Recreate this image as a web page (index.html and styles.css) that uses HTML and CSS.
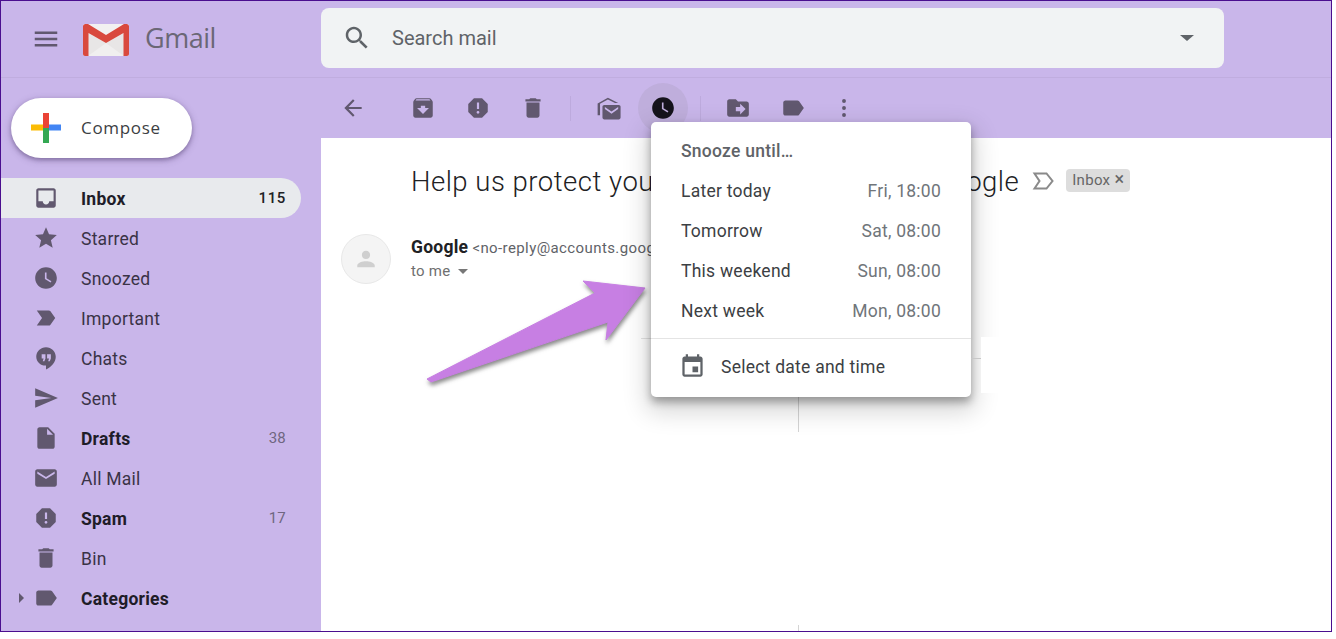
FILE: index.html
```html
<!DOCTYPE html>
<html lang="en">
<head>
    <meta charset="UTF-8">
    <title>Gmail</title>
    <link rel="stylesheet" href="styles.css">
</head>
<body>

    <svg class="sprite" xmlns="http://www.w3.org/2000/svg">
        <symbol id="i-menu" viewBox="0 0 24 24"><path d="M3 18h18v-2H3v2zm0-5h18v-2H3v2zm0-7v2h18V6H3z"/></symbol>
        <symbol id="i-search" viewBox="0 0 24 24"><path d="M15.5 14h-.79l-.28-.27C15.41 12.59 16 11.11 16 9.5 16 5.91 13.09 3 9.5 3S3 5.91 3 9.5 5.91 16 9.5 16c1.61 0 3.09-.59 4.23-1.57l.27.28v.79l5 4.99L20.49 19l-4.99-5zm-6 0C7.01 14 5 11.99 5 9.5S7.01 5 9.5 5 14 7.01 14 9.5 11.99 14 9.5 14z"/></symbol>
        <symbol id="i-inbox" viewBox="0 0 24 24"><path d="M19 3H5c-1.1 0-2 .9-2 2v14c0 1.1.9 2 2 2h14c1.1 0 2-.9 2-2V5c0-1.1-.9-2-2-2zm0 12h-4c0 1.66-1.34 3-3 3s-3-1.34-3-3H5V5h14v10z"/></symbol>
        <symbol id="i-star" viewBox="0 0 24 24"><path d="M12 17.27L18.18 21l-1.64-7.03L22 9.24l-7.19-.61L12 2 9.19 8.63 2 9.24l5.46 4.73L5.82 21z"/></symbol>
        <symbol id="i-clock" viewBox="0 0 24 24"><path d="M11.99 2C6.47 2 2 6.48 2 12s4.47 10 9.99 10C17.52 22 22 17.52 22 12S17.52 2 11.99 2zM16.2 16.2L11 13V7h1.5v5.2l4.5 2.7-.8 1.3z"/></symbol>
        <symbol id="i-important" viewBox="0 0 24 24"><path d="M3.5 18.99l11 .01c.67 0 1.27-.33 1.63-.84L20.5 12l-4.37-6.16c-.36-.51-.96-.84-1.63-.84l-11 .01L8.34 12 3.5 18.99z"/></symbol>
        <symbol id="i-chat" viewBox="0 0 24 24"><path d="M12 2C7 2 3 6 3 10.8 3 15.500 7 19 11.500 19H12v3.500c4.900-2.300 9-6.700 9-11.700C21 6 17 2 12 2zm-.5 10.500l-1 2.500H9l.8-2.500H8V8.500h3.500v4zm5 0l-1 2.500H14l.8-2.500H13V8.500h3.500v4z"/></symbol>
        <symbol id="i-send" viewBox="0 0 24 24"><path d="M2.010 21L23 12 2.010 3 2 10l15 2-15 2z"/></symbol>
        <symbol id="i-draft" viewBox="0 0 24 24"><path d="M6 2c-1.100 0-1.990.9-1.990 2L4 20c0 1.100.89 2 1.990 2H18c1.100 0 2-.9 2-2V8l-6-6H6zm7 7V3.500L18.500 9H13z"/></symbol>
        <symbol id="i-mail" viewBox="0 0 24 24"><path d="M20 4H4c-1.100 0-1.990.9-1.990 2L2 18c0 1.100.9 2 2 2h16c1.100 0 2-.9 2-2V6c0-1.100-.9-2-2-2zm0 4l-8 5-8-5V6l8 5 8-5v2z"/></symbol>
        <symbol id="i-report" viewBox="0 0 24 24"><path d="M15.730 3H8.270L3 8.270v7.460L8.270 21h7.460L21 15.730V8.270L15.730 3zM12 17.300c-.72 0-1.300-.58-1.300-1.300 0-.72.58-1.300 1.300-1.300.72 0 1.300.58 1.300 1.300 0 .72-.58 1.300-1.300 1.300zm1-4.300h-2V7h2v6z"/></symbol>
        <symbol id="i-bin" viewBox="0 0 24 24"><path d="M6 19c0 1.100.9 2 2 2h8c1.100 0 2-.9 2-2V7H6v12zM19 4h-3.500l-1-1h-5l-1 1H5v2h14V4z"/></symbol>
        <symbol id="i-label" viewBox="0 0 24 24"><path d="M17.630 5.840C17.270 5.330 16.670 5 16 5L5 5.010C3.900 5.010 3 5.900 3 7v10c0 1.100.9 1.990 2 1.990L16 19c.67 0 1.270-.33 1.630-.84L22 12l-4.370-6.160z"/></symbol>
        <symbol id="i-archive" viewBox="0 0 24 24"><path d="M20.540 5.230l-1.390-1.680C18.880 3.210 18.470 3 18 3H6c-.47 0-.88.21-1.160.55L3.460 5.230C3.170 5.570 3 6.020 3 6.500V19c0 1.100.9 2 2 2h14c1.100 0 2-.9 2-2V6.500c0-.48-.17-.93-.46-1.270zM12 17.500L6.500 12H10v-2h4v2h3.500L12 17.500zM5.120 5l.81-1h12l.94 1H5.120z"/></symbol>
        <symbol id="i-back" viewBox="0 0 24 24"><path d="M20 11H7.830l5.590-5.590L12 4l-8 8 8 8 1.410-1.410L7.830 13H20v-2z"/></symbol>
        <symbol id="i-unread" viewBox="0 0 24 24"><path d="M3 17.500V7.800L11.500 3 20 7.500h-2.600l-5.900-2.900L5 8v9.500H3zM8.500 9h12c.8 0 1.500.7 1.500 1.500v9c0 .8-.7 1.500-1.500 1.500h-12c-.8 0-1.500-.7-1.500-1.500v-9C7 9.700 7.700 9 8.500 9zm6 7.300l5.500-3.800v-1.700l-5.500 3.700L9 10.800v1.700l5.500 3.800z"/></symbol>
        <symbol id="i-move" viewBox="0 0 24 24"><path d="M20 6h-8l-2-2H4c-1.100 0-2 .9-2 2v12c0 1.100.9 2 2 2h16c1.100 0 2-.9 2-2V8c0-1.100-.9-2-2-2zm-6 12v-3h-4v-4h4V8l5 5-5 5z"/></symbol>
        <symbol id="i-more" viewBox="0 0 24 24"><circle cx="12" cy="5.500" r="1.800"/><circle cx="12" cy="12" r="1.800"/><circle cx="12" cy="18.500" r="1.800"/></symbol>
        <symbol id="i-event" viewBox="0 0 24 24"><path d="M17 12h-5v5h5v-5zM16 1v2H8V1H6v2H5c-1.110 0-1.990.9-1.990 2L3 19c0 1.100.89 2 2 2h14c1.100 0 2-.9 2-2V5c0-1.100-.9-2-2-2h-1V1h-2zm3 18H5V8h14v11z"/></symbol>
    </svg>

    <div class="frame">
        <header class="topbar">
            <div class="brand">
                <svg class="icon menu-icon"><use href="#i-menu"/></svg>
                <svg class="logo" viewBox="0 0 46 32">
                    <rect x="0" y="0" width="46" height="32" rx="2" fill="#f2f1f1"/>
                    <path d="M5 32V9l18 10L41 9v23z" fill="#e8e6e6"/>
                    <path d="M5 32l18-13 18 13z" fill="#f0efef"/>
                    <path d="M0 2.500C0 1 1 0 2.500 0H5l18 11L41 0h2.500C45 0 46 1 46 2.500V30c0 1.100-.9 2-2 2h-3.500V9L23 19 5.500 9v23H2c-1.100 0-2-.9-2-2z" fill="#d9493e"/>
                </svg>
                <span class="logo-text">Gmail</span>
            </div>
            <div class="search">
                <svg class="icon search-icon"><use href="#i-search"/></svg>
                <span class="search-text">Search mail</span>
                <span class="search-caret"></span>
            </div>
        </header>

        <div class="layout">
            <aside class="sidebar">
                <div class="compose">
                    <svg class="compose-plus" viewBox="0 0 30 30">
                        <rect x="0" y="11.500" width="15" height="6" fill="#fbbc05"/>
                        <rect x="15" y="11.500" width="15" height="6" fill="#4285f4"/>
                        <rect x="12" y="0" width="6" height="15" fill="#ea4335"/>
                        <rect x="12" y="15" width="6" height="15" fill="#34a853"/>
                    </svg>
                    <span>Compose</span>
                </div>
                <nav class="nav">
                    <div class="nav-row active bold"><svg class="icon"><use href="#i-inbox"/></svg><span class="nav-name">Inbox</span><span class="count">115</span></div>
                    <div class="nav-row"><svg class="icon"><use href="#i-star"/></svg><span class="nav-name">Starred</span></div>
                    <div class="nav-row"><svg class="icon"><use href="#i-clock"/></svg><span class="nav-name">Snoozed</span></div>
                    <div class="nav-row"><svg class="icon"><use href="#i-important"/></svg><span class="nav-name">Important</span></div>
                    <div class="nav-row"><svg class="icon"><use href="#i-chat"/></svg><span class="nav-name">Chats</span></div>
                    <div class="nav-row"><svg class="icon"><use href="#i-send"/></svg><span class="nav-name">Sent</span></div>
                    <div class="nav-row bold"><svg class="icon"><use href="#i-draft"/></svg><span class="nav-name">Drafts</span><span class="count">38</span></div>
                    <div class="nav-row"><svg class="icon"><use href="#i-mail"/></svg><span class="nav-name">All Mail</span></div>
                    <div class="nav-row bold"><svg class="icon"><use href="#i-report"/></svg><span class="nav-name">Spam</span><span class="count">17</span></div>
                    <div class="nav-row"><svg class="icon"><use href="#i-bin"/></svg><span class="nav-name">Bin</span></div>
                    <div class="nav-row bold"><span class="expand"></span><svg class="icon"><use href="#i-label"/></svg><span class="nav-name">Categories</span></div>
                    <div class="nav-row nav-last bold"><svg class="icon"></svg><span class="nav-name">Imports</span></div>
                </nav>
            </aside>

            <main class="content">
                <div class="toolbar">
                    <button class="tool back-tool"><svg class="icon"><use href="#i-back"/></svg></button>
                    <button class="tool"><svg class="icon"><use href="#i-archive"/></svg></button>
                    <button class="tool"><svg class="icon"><use href="#i-report"/></svg></button>
                    <button class="tool"><svg class="icon"><use href="#i-bin"/></svg></button>
                    <span class="tool-sep"></span>
                    <button class="tool"><svg class="icon unread-icon"><use href="#i-unread"/></svg></button>
                    <button class="tool tool-on"><svg class="icon"><use href="#i-clock"/></svg></button>
                    <span class="tool-sep"></span>
                    <button class="tool"><svg class="icon"><use href="#i-move"/></svg></button>
                    <button class="tool"><svg class="icon"><use href="#i-label"/></svg></button>
                    <button class="tool more-tool"><svg class="icon"><use href="#i-more"/></svg></button>
                </div>

                <section class="mail">
                    <div class="subject-row">
                        <h1 class="subject">Help us protect you: Security advice from Google</h1>
                        <svg class="flag" viewBox="0 0 24 24"><path d="M2.500 19.500l5-7.500-5-7.500h12l6 7.500-6 7.500z" fill="none" stroke="#8a8a8a" stroke-width="2"/></svg>
                        <span class="chip">Inbox <b>×</b></span>
                    </div>
                    <div class="sender">
                        <div class="avatar">
                            <svg viewBox="0 0 24 24"><path d="M12 12c2 0 3.300-1.500 3.300-3.300S14 5.400 12 5.400 8.700 6.900 8.700 8.700 10 12 12 12zm0 1.800c-2.700 0-7 1.200-7 3.400v1.400h14v-1.400c0-2.200-4.300-3.400-7-3.400z"/></svg>
                        </div>
                        <div class="sender-text">
                            <div class="sender-line"><strong>Google</strong> <span>&lt;no-reply@accounts.google.com&gt;</span></div>
                            <div class="to-line">to me <span class="to-caret"></span></div>
                        </div>
                    </div>
                </section>
            </main>
        </div>

        <span class="stray stray-v1"></span>
        <span class="stray stray-v2"></span>
        <span class="stray stray-h1"></span>

        <svg class="arrow" viewBox="420 275 235 115">
            <path d="M583 281L645 288 606 340 608 322 431 382 427 379 595 293z" fill="#c77fe3" stroke="#c77fe3" stroke-linejoin="round"/>
        </svg>

        <div class="snooze">
            <div class="snooze-title">Snooze until…</div>
            <div class="snooze-row"><span>Later today</span><span class="when">Fri, 18:00</span></div>
            <div class="snooze-row"><span>Tomorrow</span><span class="when">Sat, 08:00</span></div>
            <div class="snooze-row"><span>This weekend</span><span class="when">Sun, 08:00</span></div>
            <div class="snooze-row"><span>Next week</span><span class="when">Mon, 08:00</span></div>
            <div class="snooze-pick"><svg class="icon"><use href="#i-event"/></svg><span>Select date and time</span></div>
        </div>

        <span class="scrap"></span>
        <span class="stray stray-h2"></span>
    </div>

</body>
</html>
```

FILE: styles.css
```css
* {
    box-sizing: border-box;
}

body {
    margin: 0;
    background-color: #ffffff;
    font-family: Roboto, "Liberation Sans", sans-serif;
    font-size: 17.5px;
    letter-spacing: 0.25px;
    color: #3a3346;
}

.sprite {
    display: none;
}

.icon {
    width: 26px;
    height: 26px;
    flex: none;
    fill: #61586f;
}

.frame {
    position: relative;
    width: 1332px;
    height: 632px;
    border: 1px solid #4a0e8f;
    background-color: #c9b6ea;
    overflow: hidden;
}

/* top bar */
.topbar {
    display: flex;
    height: 77px;
    border-bottom: 1px solid #c0addf;
}

.topbar .icon {
    width: 30px;
    height: 30px;
}

.brand {
    display: flex;
    align-items: center;
    width: 320px;
    height: 76px;
    padding-left: 30px;
}

.logo {
    width: 46px;
    height: 32px;
    margin-left: 22px;
    margin-top: 1px;
}

.logo-text {
    margin-left: 16px;
    margin-bottom: 4px;
    font-family: "Open Sans", sans-serif;
    font-size: 27px;
    color: #6b6776;
    letter-spacing: -0.5px;
}

.search {
    display: flex;
    align-items: center;
    width: 903px;
    height: 60px;
    margin-top: 7px;
    padding: 0 25px 0 21px;
    border-radius: 8px;
    background-color: #f1f3f4;
}

.search-icon {
    fill: #5f6368;
}

.search-text {
    margin-left: 20px;
    flex: 1;
    font-size: 20px;
    letter-spacing: 0;
    color: #5f6368;
}

.search-caret {
    border-top: 6px solid #5f6368;
    border-left: 7px solid transparent;
    border-right: 7px solid transparent;
    margin-right: 5px;
}

.layout {
    display: flex;
    height: 553px;
}

/* sidebar */
.sidebar {
    width: 320px;
    flex: none;
    padding-top: 20px;
}

.compose {
    display: flex;
    align-items: center;
    width: 181px;
    height: 60px;
    margin-left: 10px;
    padding-left: 20px;
    border-radius: 30px;
    background-color: #ffffff;
    box-shadow: 0 2px 4px rgba(60, 40, 90, 0.4), 0 2px 8px rgba(60, 40, 90, 0.2);
    font-family: "Open Sans", sans-serif;
    font-size: 17px;
    letter-spacing: 0.7px;
    color: #3c4043;
}

.compose span {
    margin-bottom: 2px;
}

.compose-plus {
    width: 30px;
    height: 30px;
    margin-right: 20px;
}

.nav {
    margin-top: 20px;
}

.nav-row {
    position: relative;
    display: flex;
    align-items: center;
    gap: 22px;
    width: 300px;
    height: 40px;
    padding: 0 15px 0 32px;
    border-radius: 0 20px 20px 0;
}

.nav-name {
    flex: 1;
    padding-top: 2px;
}

.nav-last {
    margin-top: -1px;
}

.bold {
    font-weight: 500;
    color: #201c28;
}

.bold .nav-name {
    font-weight: 700;
}

.active {
    background-color: #e8eaed;
}

.count {
    font-size: 15px;
    font-weight: 400;
    color: #6f6680;
}

.active .count {
    font-weight: 500;
    color: #202124;
    letter-spacing: 0.6px;
}

.expand {
    position: absolute;
    left: 18px;
    top: 15px;
    border-left: 5px solid #61586f;
    border-top: 5px solid transparent;
    border-bottom: 5px solid transparent;
}

/* toolbar */
.content {
    flex: 1;
    display: flex;
    flex-direction: column;
}

.toolbar {
    display: flex;
    align-items: center;
    gap: 5px;
    height: 60px;
    padding-left: 7px;
}

.tool {
    display: flex;
    align-items: center;
    justify-content: center;
    width: 50px;
    height: 50px;
    padding: 0;
    border: none;
    border-radius: 50%;
    background: none;
}

.back-tool {
    margin-right: 15px;
}

.more-tool {
    margin-left: -4px;
}

.unread-icon {
    width: 29px;
    height: 29px;
}

.tool-sep {
    width: 1px;
    height: 25px;
    margin: 0 7px;
    background-color: #bdaadd;
}

.tool-on {
    background-color: #bfaedc;
}

.tool-on .icon {
    fill: #15131b;
}

/* mail */
.mail {
    flex: 1;
    background-color: #ffffff;
}

.subject-row {
    display: flex;
    align-items: center;
    height: 44px;
    margin-top: 21px;
    padding-left: 90px;
}

.subject {
    margin: 0;
    font-size: 27.5px;
    font-weight: 300;
    letter-spacing: 0.5px;
    color: #202124;
    white-space: nowrap;
}

.flag {
    width: 24px;
    height: 24px;
    margin-left: 13px;
}

.chip {
    margin-left: 10px;
    margin-bottom: 2px;
    padding: 0 6px;
    height: 23px;
    line-height: 23px;
    border-radius: 4px;
    background-color: #dddddd;
    font-size: 15px;
    letter-spacing: 0.3px;
    color: #666666;
    white-space: nowrap;
}

.chip b {
    font-size: 18px;
    font-weight: 400;
    line-height: 18px;
    color: #666666;
}

.sender {
    display: flex;
    gap: 20px;
    margin-top: 31px;
    padding-left: 20px;
}

.avatar {
    width: 50px;
    height: 50px;
    border-radius: 50%;
    border: 1px solid #e8e8e8;
    background-color: #f4f4f4;
    display: flex;
    align-items: center;
    justify-content: center;
}

.avatar svg {
    width: 30px;
    height: 30px;
    fill: #cfcfcf;
}

.sender-line {
    height: 25px;
    line-height: 27px;
    white-space: nowrap;
    font-size: 15px;
    letter-spacing: 0.4px;
    color: #5f6368;
}

.sender-line strong {
    font-size: 17.5px;
    font-weight: 700;
    letter-spacing: 0.25px;
    color: #202124;
}

.to-line {
    font-size: 15px;
    color: #6f6f6f;
    line-height: 25px;
}

.to-caret {
    display: inline-block;
    margin-left: 4px;
    vertical-align: 2px;
    border-top: 5px solid #777777;
    border-left: 5px solid transparent;
    border-right: 5px solid transparent;
}

/* leftovers of the capture under the menu */
.stray {
    position: absolute;
    background-color: #d4d4d4;
}

.stray-v1 {
    left: 797px;
    top: 396px;
    width: 1px;
    height: 35px;
}

.stray-v2 {
    left: 797px;
    top: 624px;
    width: 1px;
    height: 7px;
}

.stray-h1 {
    left: 640px;
    top: 337px;
    width: 10px;
    height: 1px;
    background-color: #e4e4e4;
}

.stray-h2 {
    left: 970px;
    top: 357px;
    width: 10px;
    height: 1px;
    z-index: 4;
    background-color: #c8c8c8;
}

.scrap {
    position: absolute;
    left: 980px;
    top: 336px;
    width: 40px;
    height: 56px;
    z-index: 3;
    background-color: #ffffff;
}

.arrow {
    position: absolute;
    left: 419px;
    top: 274px;
    width: 235px;
    height: 115px;
    filter: drop-shadow(1px 3px 2px rgba(40, 40, 40, 0.55));
}

/* snooze menu */
.snooze {
    position: absolute;
    left: 650px;
    top: 121px;
    width: 320px;
    height: 275px;
    z-index: 2;
    padding-top: 8px;
    border-radius: 5px;
    background-color: #ffffff;
    box-shadow: 0 5px 8px rgba(0, 0, 0, 0.32), 0 10px 24px 5px rgba(0, 0, 0, 0.16);
}

.snooze-title {
    height: 40px;
    line-height: 42px;
    padding: 0 30px;
    font-weight: 500;
    color: #5f6368;
}

.snooze-row {
    display: flex;
    justify-content: space-between;
    align-items: center;
    height: 40px;
    padding: 2px 30px 0;
    color: #3c4043;
}

.when {
    color: #70757a;
}

.snooze-pick {
    display: flex;
    align-items: center;
    gap: 15px;
    height: 58px;
    margin-top: 8px;
    padding: 0 0 2px 28px;
    border-top: 1px solid #e4e4e4;
    color: #3c4043;
}

.snooze-pick .icon {
    width: 27px;
    height: 27px;
    fill: #5f6368;
}
```
